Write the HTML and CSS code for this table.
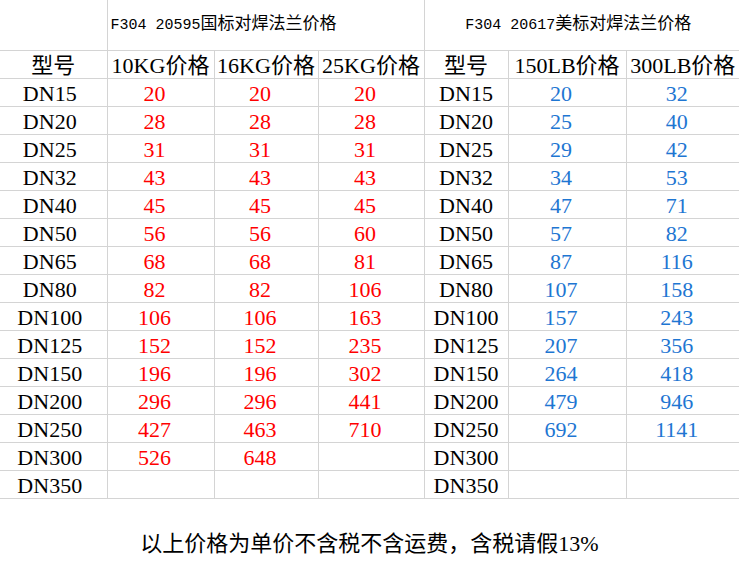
FILE: index.html
```html
<!DOCTYPE html>
<html lang="zh-CN">
<head>
<meta charset="utf-8">
<title>F304 对焊法兰价格</title>
<link rel="stylesheet" href="styles.css">
</head>
<body>
<table class="sheet">
  <colgroup>
    <col class="c1"><col class="c2"><col class="c3"><col class="c4"><col class="c5"><col class="c6"><col class="c7">
  </colgroup>
  <tr class="title-row">
    <td class="blank"></td>
    <td colspan="3" class="title left"><span class="lat">F304 20595</span>国标对焊法兰价格</td>
    <td colspan="3" class="title center"><span class="lat">F304 20617</span>美标对焊法兰价格</td>
  </tr>
  <tr class="head">
    <td>型号</td><td>10KG价格</td><td>16KG价格</td><td>25KG价格</td><td>型号</td><td>150LB价格</td><td>300LB价格</td>
  </tr>
  <tr><td class="dn">DN15</td><td class="r">20</td><td class="r">20</td><td class="r">20</td><td class="dn2">DN15</td><td class="b">20</td><td class="b">32</td></tr>
  <tr><td class="dn">DN20</td><td class="r">28</td><td class="r">28</td><td class="r">28</td><td class="dn2">DN20</td><td class="b">25</td><td class="b">40</td></tr>
  <tr><td class="dn">DN25</td><td class="r">31</td><td class="r">31</td><td class="r">31</td><td class="dn2">DN25</td><td class="b">29</td><td class="b">42</td></tr>
  <tr><td class="dn">DN32</td><td class="r">43</td><td class="r">43</td><td class="r">43</td><td class="dn2">DN32</td><td class="b">34</td><td class="b">53</td></tr>
  <tr><td class="dn">DN40</td><td class="r">45</td><td class="r">45</td><td class="r">45</td><td class="dn2">DN40</td><td class="b">47</td><td class="b">71</td></tr>
  <tr><td class="dn">DN50</td><td class="r">56</td><td class="r">56</td><td class="r">60</td><td class="dn2">DN50</td><td class="b">57</td><td class="b">82</td></tr>
  <tr><td class="dn">DN65</td><td class="r">68</td><td class="r">68</td><td class="r">81</td><td class="dn2">DN65</td><td class="b">87</td><td class="b">116</td></tr>
  <tr><td class="dn">DN80</td><td class="r">82</td><td class="r">82</td><td class="r">106</td><td class="dn2">DN80</td><td class="b">107</td><td class="b">158</td></tr>
  <tr><td class="dn">DN100</td><td class="r">106</td><td class="r">106</td><td class="r">163</td><td class="dn2">DN100</td><td class="b">157</td><td class="b">243</td></tr>
  <tr><td class="dn">DN125</td><td class="r">152</td><td class="r">152</td><td class="r">235</td><td class="dn2">DN125</td><td class="b">207</td><td class="b">356</td></tr>
  <tr><td class="dn">DN150</td><td class="r">196</td><td class="r">196</td><td class="r">302</td><td class="dn2">DN150</td><td class="b">264</td><td class="b">418</td></tr>
  <tr><td class="dn">DN200</td><td class="r">296</td><td class="r">296</td><td class="r">441</td><td class="dn2">DN200</td><td class="b">479</td><td class="b">946</td></tr>
  <tr><td class="dn">DN250</td><td class="r">427</td><td class="r">463</td><td class="r">710</td><td class="dn2">DN250</td><td class="b">692</td><td class="b">1141</td></tr>
  <tr><td class="dn">DN300</td><td class="r">526</td><td class="r">648</td><td class="r"></td><td class="dn2">DN300</td><td class="b"></td><td class="b"></td></tr>
  <tr><td class="dn">DN350</td><td class="r"></td><td class="r"></td><td class="r"></td><td class="dn2">DN350</td><td class="b"></td><td class="b"></td></tr>
</table>
<p class="note">以上价格为单价不含税不含运费，含税请假13%</p>
</body>
</html>
```

FILE: styles.css
```css
html, body {
  margin: 0;
  padding: 0;
  background: #ffffff;
}

body {
  font-family: "Liberation Serif", "Noto Sans CJK SC", serif;
  color: #000000;
  width: 739px;
}

.sheet {
  border-collapse: collapse;
  table-layout: fixed;
  width: 739px;
}

.c1 { width: 107px; }
.c2 { width: 107px; }
.c3 { width: 104px; }
.c4 { width: 106px; }
.c5 { width: 84px; }
.c6 { width: 118px; }
.c7 { width: 113px; }

.sheet td {
  border: 1px solid #d4d4d4;
  font-size: 22px;
  line-height: 22px;
  height: 28px;
  padding: 4px 0 0 0;
  box-sizing: border-box;
  text-align: center;
  vertical-align: top;
  white-space: nowrap;
  overflow: hidden;
}

.sheet tr td:first-child { border-left: none; }
.sheet tr td:last-child { border-right: none; }

.sheet .title-row td {
  border-top: none;
  height: 50px;
  padding: 0;
  vertical-align: middle;
  font-size: 17px;
  line-height: 20px;
}

.sheet .title.left {
  text-align: left;
  padding-left: 3px;
}

.sheet .title.center {
  text-align: center;
  padding-right: 7px;
}

.lat {
  font-family: "Liberation Mono", monospace;
  font-size: 15px;
}

.sheet td.dn { padding-right: 7px; }

.sheet td.r {
  color: #ff0000;
  padding-right: 12px;
}

.sheet td.b {
  color: #1e76d2;
  padding-right: 12px;
}

.note {
  margin: 30px 0 0 0;
  text-align: center;
  font-size: 22px;
  line-height: 30px;
}
```
